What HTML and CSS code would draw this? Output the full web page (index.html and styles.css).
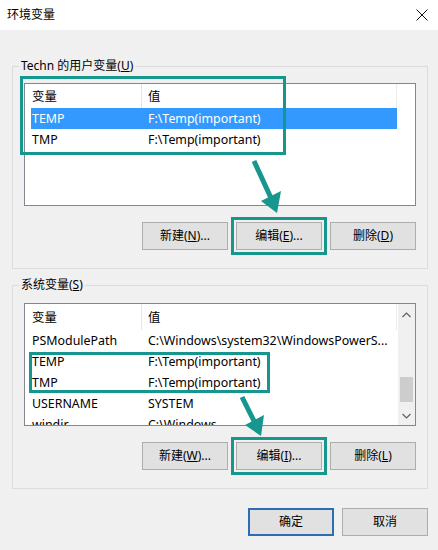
FILE: index.html
```html
<!DOCTYPE html>
<html lang="zh-CN">
<head>
<meta charset="utf-8">
<title>环境变量</title>
<link rel="stylesheet" href="styles.css">
</head>
<body>
<div class="window">
  <div class="titlebar">
    <span class="title">环境变量</span>
    <svg class="close" width="12" height="12" viewBox="0 0 12 12"><path d="M0.5 0.5 L11.5 11.5 M11.5 0.5 L0.5 11.5" stroke="#111" stroke-width="1" fill="none"/></svg>
  </div>
  <div class="content">
    <fieldset class="group">
      <legend>Techn 的用户变量(<u>U</u>)</legend>
      <div class="list">
        <div class="rows">
          <div class="row head"><span class="c1">变量</span><span class="c2">值</span></div>
          <div class="row sel"><span class="c1">TEMP</span><span class="c2">F:\Temp(important)</span></div>
          <div class="row"><span class="c1">TMP</span><span class="c2">F:\Temp(important)</span></div>
        </div>
        <div class="mark mark-user"></div>
      </div>
      <div class="buttons">
        <button class="btn">新建(<u>N</u>)...</button>
        <button class="btn marked">编辑(<u>E</u>)...</button>
        <button class="btn">删除(<u>D</u>)</button>
      </div>
    </fieldset>

    <fieldset class="group sys">
      <legend>系统变量(<u>S</u>)</legend>
      <div class="list">
        <div class="rows">
          <div class="row head tall"><span class="c1">变量</span><span class="c2">值</span></div>
          <div class="row"><span class="c1">PSModulePath</span><span class="c2">C:\Windows\system32\WindowsPowerS...</span></div>
          <div class="row"><span class="c1">TEMP</span><span class="c2">F:\Temp(important)</span></div>
          <div class="row"><span class="c1">TMP</span><span class="c2">F:\Temp(important)</span></div>
          <div class="row"><span class="c1">USERNAME</span><span class="c2">SYSTEM</span></div>
          <div class="row"><span class="c1">windir</span><span class="c2">C:\Windows</span></div>
        </div>
        <div class="scrollbar">
          <svg class="sb-up" width="9" height="6" viewBox="0 0 9 6"><path d="M0.5 5 L4.5 1 L8.5 5" stroke="#606060" stroke-width="1.2" fill="none"/></svg>
          <div class="thumb"></div>
          <svg class="sb-down" width="9" height="6" viewBox="0 0 9 6"><path d="M0.5 1 L4.5 5 L8.5 1" stroke="#606060" stroke-width="1.2" fill="none"/></svg>
        </div>
        <div class="mark mark-sys"></div>
      </div>
      <div class="buttons">
        <button class="btn">新建(<u>W</u>)...</button>
        <button class="btn marked">编辑(<u>I</u>)...</button>
        <button class="btn">删除(<u>L</u>)</button>
      </div>
    </fieldset>

    <div class="footer">
      <button class="btn default">确定</button>
      <button class="btn">取消</button>
    </div>
  </div>

  <svg class="arrows" width="438" height="550" viewBox="0 0 438 550">
    <line x1="254" y1="161" x2="271" y2="198" stroke="#16968c" stroke-width="5"/>
    <polygon points="261,201 281,191 277,213" fill="#16968c"/>
    <line x1="242" y1="397" x2="254" y2="421" stroke="#16968c" stroke-width="5"/>
    <polygon points="245,425 264,415 261,436" fill="#16968c"/>
  </svg>
</div>
</body>
</html>
```

FILE: styles.css
```css
* { box-sizing: border-box; }

html, body {
  margin: 0;
  padding: 0;
}

body {
  width: 438px;
  height: 550px;
  overflow: hidden;
  font-family: "Noto Sans", "Noto Sans CJK SC", sans-serif;
  font-size: 12px;
  color: #000;
  background: #f0f0f0;
}

.window {
  position: relative;
  width: 438px;
  height: 550px;
  background: #f0f0f0;
}

.titlebar {
  height: 30px;
  background: #fff;
  display: flex;
  align-items: center;
  justify-content: space-between;
  padding: 0 8px 0 7px;
}

.title {
  font-size: 12px;
  line-height: 16px;
}

.close {
  display: block;
  margin-right: 2px;
}

.content {
  padding: 28px 10px 0 12px;
}

.group {
  margin: 0;
  width: 416px;
  min-width: 0;
  border: 1px solid #dcdcdc;
  padding: 0 11px 18px 11px;
}

.group.sys {
  margin-top: 8px;
}

.group legend {
  padding: 0 2px;
  margin-left: -5px;
  line-height: 16px;
  font-size: 12px;
}

.list {
  position: relative;
  margin-top: 9px;
  height: 123px;
  border: 1px solid #828790;
  background: #fff;
  font-size: 12.4px;
}

.sys .list {
  margin-top: 10px;
}

.rows {
  height: 100%;
  overflow: hidden;
}

.row {
  display: flex;
  height: 21px;
  align-items: center;
  margin-left: 6px;
  width: 366px;
  white-space: nowrap;
}

.row.head {
  height: 24px;
}

.row.head.tall {
  height: 26px;
}

.row .c1 {
  width: 111px;
  padding-left: 1px;
  flex: none;
}

.row .c2 {
  padding-left: 6px;
  flex: 1;
}

.row.head .c1 {
  align-self: stretch;
  display: flex;
  align-items: center;
  border-right: 1px solid #e5e5e5;
}

.row.head .c2 {
  align-self: stretch;
  display: flex;
  align-items: center;
  border-right: 1px solid #ececec;
}

.row.sel {
  background: #3399ff;
  color: #fff;
}

.mark {
  position: absolute;
  border: 3px solid #16968c;
  pointer-events: none;
}

.mark-user {
  left: -5px;
  top: -8px;
  width: 266px;
  height: 79px;
}

.mark-sys {
  left: 4px;
  top: 48px;
  width: 241px;
  height: 41px;
}

.scrollbar {
  position: absolute;
  top: 0;
  right: 0;
  width: 17px;
  height: 100%;
  background: #f0f0f0;
}

.sb-up {
  position: absolute;
  top: 8px;
  left: 4px;
}

.sb-down {
  position: absolute;
  bottom: 6px;
  left: 4px;
}

.thumb {
  position: absolute;
  top: 73px;
  left: 2px;
  width: 13px;
  height: 25px;
  background: #cdcdcd;
}

.buttons {
  display: flex;
  justify-content: flex-end;
  gap: 8px;
  margin-top: 16px;
}

.btn {
  width: 86px;
  height: 28px;
  padding: 0;
  margin: 0;
  background: #e1e1e1;
  border: 1px solid #adadad;
  font-family: "Noto Sans", "Noto Sans CJK SC", sans-serif;
  font-size: 12px;
  color: #000;
  line-height: 16px;
}

.btn.marked {
  outline: 3px solid #16968c;
  outline-offset: 2px;
}

.btn.default {
  border: 2px solid #2a6fb0;
}

.footer {
  display: flex;
  justify-content: flex-end;
  gap: 8px;
  margin-top: 19px;
}

.arrows {
  position: absolute;
  left: 0;
  top: 0;
  pointer-events: none;
}
```
